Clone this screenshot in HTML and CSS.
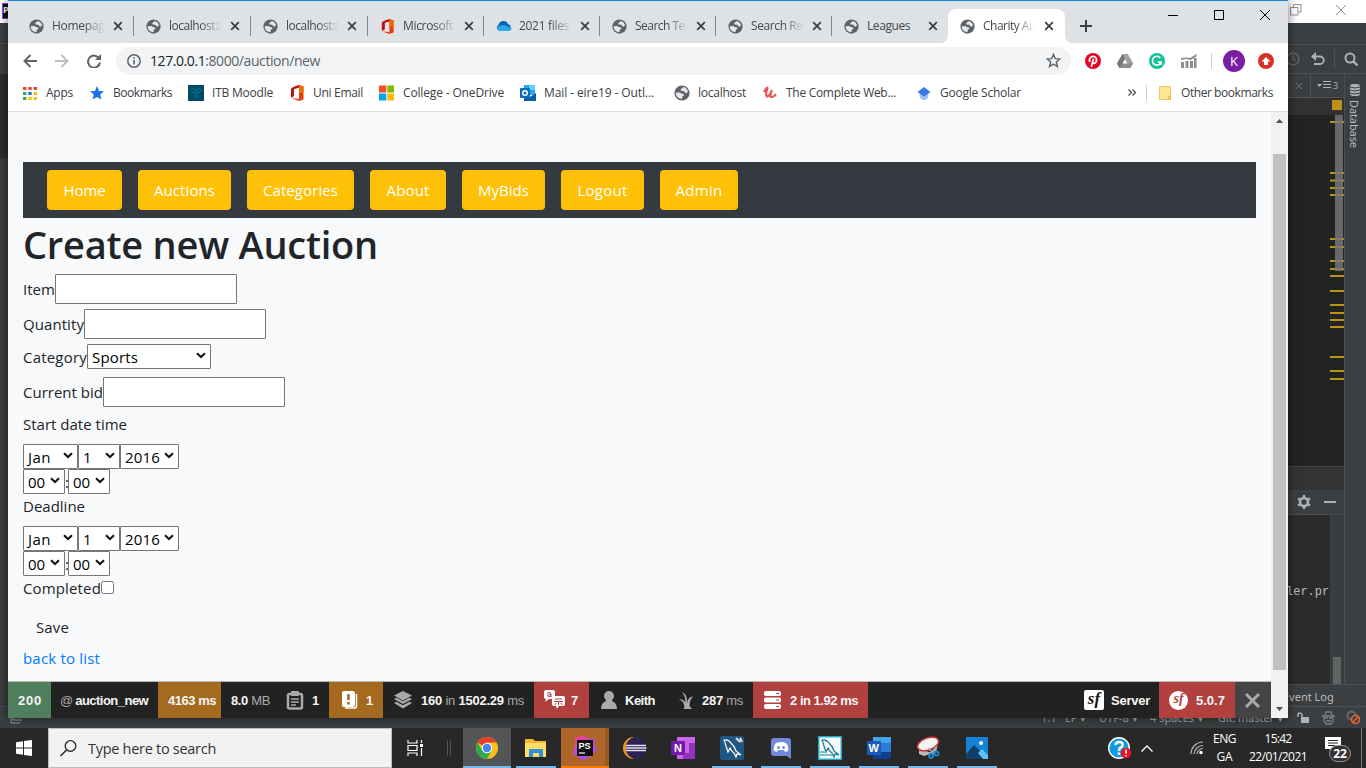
FILE: index.html
```html
<!DOCTYPE html>
<html lang="en">
<head>
<meta charset="utf-8">
<title>Charity Auction</title>
<link rel="stylesheet" href="styles.css">
</head>
<body>
<svg class="defs" width="0" height="0">
  <symbol id="globe" viewBox="0 0 16 16"><circle cx="8" cy="8" r="7.600" fill="#5f6368"/><path d="M1.900 7.600L5.500 7.400L7.500 8.600L9.800 9L10 10.500L8.300 11.400L8 14Q3.200 13.500 1.900 9.500Z" fill="#e4e6e9"/><path d="M8 3.200L9.600 2Q12.800 2.800 14 6.500L12.500 8.200L10.800 7.400L10 6L7 5.800L6.600 4.600Z" fill="#e4e6e9"/></symbol>
  <symbol id="x" viewBox="0 0 10 10"><path d="M1.200 1.200L8.800 8.800M8.800 1.200L1.200 8.800" stroke="#3c4043" stroke-width="1.800"/></symbol>
  <symbol id="office" viewBox="0 0 14 16"><path d="M9 0L13.500 1.500V14.500L9 16L1 13L9 14V2.500L4 4V11L1 12.500V4Z" fill="#e43d12"/><path d="M9 0L4.500 1.600Q1 2.800 1 5V12.500L4 11V4L9 2.500Z" fill="#b5121b"/><path d="M9 0L13.500 1.500V8H9Z" fill="#f06a00"/></symbol>
  <symbol id="chev" viewBox="0 0 10 7"><path d="M1 1.200L5 5L9 1.200" fill="none" stroke="#111" stroke-width="2"/></symbol>
  <symbol id="dolphin" viewBox="0 0 24 24"><path d="M4 4Q8 3 11 7Q15 11 16 15L21 19L17 18L16 21L14 17Q11 15 10 12L8 16L6 10Q5 6 4 4Z" fill="none" stroke="currentColor" stroke-width="1.200"/></symbol>
</svg>
<div class="desktop">
  <section class="ide">
    <div class="ide-left"><div class="ide-left-top"><b>P</b></div><div class="ide-left-menu"></div><div class="ide-left-tool"></div><div class="ide-left-body"></div></div>
    <div class="ide-right">
      <div class="ide-title">
        <svg width="12" height="12" viewBox="0 0 12 12"><path d="M3.500 3V.5H11V8H8.500M.5 3.500H8V11H.5Z" fill="none" stroke="#909090"/></svg>
        <svg width="12" height="12" viewBox="0 0 12 12"><path d="M1 1L11 11M11 1L1 11" stroke="#909090"/></svg>
      </div>
      <div class="ide-menu"></div>
      <div class="ide-tools">
        <svg width="14" height="16" viewBox="0 0 14 16"><circle cx="5" cy="8" r="6" fill="none" stroke="#606364" stroke-width="1.500"/><path d="M5 4V8L8 10" fill="none" stroke="#606364" stroke-width="1.500"/></svg>
        <svg width="14" height="14" viewBox="0 0 14 14"><path d="M5 0V9L0 4.500Z" fill="#afb1b3"/><path d="M3 4.500H9A3.600 3.600 0 0 1 9 12H3" fill="none" stroke="#afb1b3" stroke-width="1.800"/></svg>
        <i></i>
        <svg width="15" height="15" viewBox="0 0 15 15"><circle cx="6" cy="6" r="4.500" fill="none" stroke="#afb1b3" stroke-width="2"/><path d="M9.300 9.300L13.500 13.500" stroke="#afb1b3" stroke-width="2.400"/></svg>
      </div>
      <div class="ide-main">
        <div class="ide-col">
          <div class="ide-tabs"><svg width="8" height="8" viewBox="0 0 8 8"><path d="M1 1L7 7M7 1L1 7" stroke="#6e7072"/></svg><i></i><svg width="14" height="9" viewBox="0 0 14 9"><path d="M0 3H5L2.500 6Z" fill="#afb1b3"/><path d="M6 .5H14M6 3.500H14M6 6.500H14" stroke="#afb1b3"/></svg><span>3</span></div>
          <div class="editor">
            <div class="editor-line"></div>
            <svg class="marks" width="16" height="369" viewBox="0 0 16 369"><rect x="3" y="3" width="10" height="10" fill="#be9117"/><path d="M1 25H15M1 76H15M1 83.500H15M1 91H15M1 98H15M1 142H15M1 150H15M1 164H15M1 172H15M1 179H15M1 194H15M1 208H15M1 216H15M1 223H15M1 230H15M1 260H15M1 274H15M1 282H15" stroke="#be9117" stroke-width="2"/><rect x="6" y="18" width="8" height="156" fill="#777" opacity=".82"/></svg>
          </div>
          <div class="ide-gap"></div>
          <div class="run-head"><svg width="14" height="14" viewBox="0 0 14 14"><circle cx="7" cy="7" r="4" fill="none" stroke="#afb1b3" stroke-width="2.600"/><path d="M7 0V3M7 11V14M1 3.500L3.500 5M10.500 9L13 10.500M1 10.500L3.500 9M10.500 5L13 3.500" stroke="#afb1b3" stroke-width="2.400"/></svg><b></b></div>
          <div class="console"><code>ler.pr</code><div class="console-bar"><i></i></div></div>
        </div>
        <div class="database"><svg width="12" height="14" viewBox="0 0 12 14"><rect x="1" y="1" width="10" height="12" rx="3" fill="#afb1b3"/><path d="M1 4Q6 6 11 4M1 7Q6 9 11 7M1 10Q6 12 11 10" stroke="#3c3f41" fill="none"/></svg><span>Database</span></div>
      </div>
      <div class="eventlog"><span>Event Log</span></div>
    </div>
    <div class="status">
      <svg width="12" height="14" viewBox="0 0 12 14"><path d="M3 0V9H12M1 3V12H10" fill="none" stroke="#9da0a2"/></svg>
      <span class="s1">1:1</span><span class="s2">LF <small>▼</small></span><span class="s3">UTF-8 <small>▼</small></span><span class="s4">4 spaces <small>▼</small></span><span class="s5">Git: master <small>▼</small></span>
      <svg class="lock" width="12" height="12" viewBox="0 0 12 12"><path d="M1 5V2Q1 1 2.500 1T5 2.500V6" fill="none" stroke="#afb1b3" stroke-width="1.500"/><rect x="4" y="5" width="8" height="6" fill="#afb1b3"/></svg>
      <svg width="13" height="14" viewBox="0 0 13 14"><path d="M3 4L4 1H9L10 4M0 5H13M2 5V10L4 13H9L11 10V5M3 7H6M7 7H10M4 10H9" fill="none" stroke="#7d8082" stroke-width="1.300"/></svg>
      <svg class="noenter" width="15" height="15" viewBox="0 0 15 15"><circle cx="5.500" cy="5.500" r="4" fill="none" stroke="#66696b" stroke-width="2"/><circle cx="9.500" cy="9.500" r="4" fill="#3c3f41" stroke="#e8642c" stroke-width="1.600"/><path d="M7 12L12 7" stroke="#e8642c" stroke-width="1.600"/></svg>
    </div>
  </section>

  <section class="browser">
    <header class="tabstrip">
      <div class="tab wide"><svg><use href="#globe"/></svg><span class="title"><em data-w="59">Homepage</em></span><svg class="x"><use href="#x"/></svg></div>
      <div class="tab wide"><svg><use href="#globe"/></svg><span class="title"><em data-w="55">localhost:8</em></span><svg class="x"><use href="#x"/></svg></div>
      <div class="tab wide"><svg><use href="#globe"/></svg><span class="title"><em data-w="55">localhost:8</em></span><svg class="x"><use href="#x"/></svg></div>
      <div class="tab"><svg><use href="#office"/></svg><span class="title"><em data-w="50">Microsoft</em></span><svg class="x"><use href="#x"/></svg></div>
      <div class="tab"><svg class="cloud" viewBox="0 0 16 10"><path d="M3 9.500A3 3 0 0 1 2.500 4A5 5 0 0 1 12 3A3.500 3.500 0 0 1 13 9.500Z" fill="#0364b8"/><path d="M3 9.800A3 3 0 0 1 2.500 5L8 4L15.500 7A2.500 2.500 0 0 1 13.500 9.800Z" fill="#28a8ea"/></svg><span class="title"><em data-w="50">2021 files</em></span><svg class="x"><use href="#x"/></svg></div>
      <div class="tab"><svg><use href="#globe"/></svg><span class="title"><em data-w="56">Search Tea</em></span><svg class="x"><use href="#x"/></svg></div>
      <div class="tab"><svg><use href="#globe"/></svg><span class="title"><em data-w="57">Search Res</em></span><svg class="x"><use href="#x"/></svg></div>
      <div class="tab last"><svg><use href="#globe"/></svg><span class="title full"><em data-w="43">Leagues</em></span><svg class="x"><use href="#x"/></svg></div>
      <div class="tab active"><svg><use href="#globe"/></svg><span class="title"><em data-w="58">Charity Auc</em></span><svg class="x"><use href="#x"/></svg></div>
      <svg class="plus" viewBox="0 0 12 12"><path d="M6 0V12M0 6H12" stroke="#3c4043" stroke-width="2"/></svg>
      <div class="winbtns">
        <svg viewBox="0 0 10 10"><path d="M0 5.500H10" stroke="#000"/></svg>
        <svg viewBox="0 0 10 10"><path d="M.5 .5H9.500V9.500H.5Z" fill="none" stroke="#000"/></svg>
        <svg viewBox="0 0 10 10"><path d="M0 0L10 10M10 0L0 10" stroke="#000"/></svg>
      </div>
    </header>
    <div class="toolbar">
      <svg class="back" viewBox="0 0 14 14"><path d="M14 7H1.500M7.500 1L1.500 7L7.500 13" fill="none" stroke="#5f6368" stroke-width="1.900"/></svg>
      <svg class="fwd" viewBox="0 0 14 14"><path d="M0 7H12.500M6.500 1L12.500 7L6.500 13" fill="none" stroke="#bbbdc0" stroke-width="1.900"/></svg>
      <svg class="reload" viewBox="0 0 14 14"><path d="M12.200 4.500A6 6 0 1 0 13 8.500" fill="none" stroke="#5f6368" stroke-width="2"/><path d="M14 0V6H8Z" fill="#5f6368"/></svg>
      <div class="omnibox">
        <svg width="14" height="14" viewBox="0 0 14 14"><circle cx="7" cy="7" r="6.200" fill="none" stroke="#5f6368" stroke-width="1.500"/><path d="M7 6V10.500M7 3.200V4.800" stroke="#5f6368" stroke-width="1.600"/></svg>
        <span class="url" data-w="170"><b>127.0.0.1</b>:8000/auction/new</span>
        <svg class="favstar" width="15" height="15" viewBox="0 0 16 16"><path d="M8 1.500L9.900 6L14.800 6.400L11 9.600L12.200 14.400L8 11.800L3.800 14.400L5 9.600L1.200 6.400L6.100 6Z" fill="none" stroke="#5f6368" stroke-width="1.500"/></svg>
      </div>
      <div class="exts">
        <svg width="16" height="16" viewBox="0 0 16 16"><circle cx="8" cy="8" r="8" fill="#e60023"/><path d="M5 9Q3.500 6.500 5.500 4.500Q8 2.500 10.500 4.300Q12.500 6.500 10.800 9.300Q9 11.200 7.500 9.600M8.500 5.800L6.300 14" fill="none" stroke="#fff" stroke-width="1.700"/></svg>
        <svg width="16" height="14" viewBox="0 0 16 14"><path d="M5.500 0H10.500L16 9.500L13.500 14H2.500L0 9.500Z" fill="#8c8c8c"/><path d="M5.500 0L8 4.500L2.500 14L0 9.500Z" fill="#777"/><path d="M5.500 0H10.500L16 9.500H11Z" fill="#a0a0a0"/><path d="M8 5L10.500 9.500H5.500Z" fill="#fff"/></svg>
        <svg width="16" height="16" viewBox="0 0 16 16"><circle cx="8" cy="8" r="8" fill="#15c39a"/><path d="M11.300 5A4.400 4.400 0 1 0 12 9H8.800M12 9V12" fill="none" stroke="#fff" stroke-width="1.600"/></svg>
        <svg width="16" height="14" viewBox="0 0 16 14"><path d="M0 8H3V14H0ZM4.500 7H7.500V14H4.500ZM9 7H12V14H9ZM13 4H15.500V14H13Z" fill="#8d8d8d"/><path d="M0 6V4L5 3.500L9 4L15.500 0V2.500L9.500 6L5 5Z" fill="#8d8d8d"/></svg>
        <i></i>
        <span class="avatar">K</span>
        <svg class="update" width="16" height="16" viewBox="0 0 16 16"><circle cx="8" cy="8" r="8" fill="#d93025"/><path d="M8 4L12.500 8.500H10V12H6V8.500H3.500Z" fill="#fff"/></svg>
      </div>
    </div>
    <nav class="bookmarks">
      <a><svg viewBox="0 0 16 16"><path d="M1 2h3.400v3H1zM6.300 2h3.400v3H6.300zM11.600 2H15v3h-3.400z" fill="#ea4335"/><path d="M1 7h3.400v3H1z" fill="#34a853"/><path d="M6.300 7h3.400v3H6.300z" fill="#1a73e8"/><path d="M11.600 7H15v3h-3.400zM6.300 12h3.400v3H6.300zM11.600 12H15v3h-3.400z" fill="#fbbc04"/><path d="M1 12h3.400v3H1z" fill="#34a853"/></svg><span data-w="27">Apps</span></a>
      <a><svg viewBox="0 0 16 16"><path d="M7 1L9 6L14 6.300L10.200 9.600L11.400 14.600L7 12L2.600 14.600L3.800 9.600L0 6.300L5 6Z" fill="#1a73e8"/></svg><span class="near" data-w="59">Bookmarks</span></a>
      <a><svg viewBox="0 0 16 16"><rect width="16" height="16" fill="#004a63"/><path d="M3 4Q6 2 8 5Q11 2 13 5Q13 8 9 8M4 7H7V13M9 5V13" fill="none" stroke="#08769a"/></svg><span data-w="61">ITB Moodle</span></a>
      <a><svg class="near"><use href="#office"/></svg><span data-w="50">Uni Email</span></a>
      <a><svg viewBox="0 0 16 16"><path d="M0 .5h7.300v7H0z" fill="#f25022"/><path d="M8.300 .5H15v7H8.300z" fill="#7fba00"/><path d="M0 8.500h7.300v7H0z" fill="#00a4ef"/><path d="M8.300 8.500H15v7H8.300z" fill="#ffb900"/></svg><span data-w="101">College - OneDrive</span></a>
      <a><svg viewBox="0 0 16 16"><path d="M4 0H15V10H4Z" fill="#28a8ea"/><path d="M9 0H15V5H9Z" fill="#50d9ff"/><path d="M4 8L10 12L16 8V16H4Z" fill="#0a5ca8"/><rect y="3" width="10" height="10" rx="1" fill="#0f6cbd"/><circle cx="5" cy="8" r="2.300" fill="none" stroke="#fff" stroke-width="1.500"/></svg><span data-w="110">Mail - eire19 - Outl...</span></a>
      <a><svg class="near"><use href="#globe"/></svg><span data-w="48">localhost</span></a>
      <a><svg class="near" viewBox="0 0 16 16"><path d="M2 7Q5 2 5.500 3Q3 10 5 11.500Q8 11 9.800 5Q7 12 9.500 12Q12 12 14 9" fill="none" stroke="#ec5252" stroke-width="2.200"/></svg><span data-w="110">The Complete Web...</span></a>
      <a><svg viewBox="0 0 16 16"><circle cx="8" cy="10.500" r="4.500" fill="#a0c3ff"/><path d="M8 2L14.500 7L8 11.500L1.500 7Z" fill="#3b78e7"/></svg><span data-w="81">Google Scholar</span></a>
      <div class="bm-end"><svg class="more" width="8" height="7" viewBox="0 0 8 7"><path d="M.5 .5L3.500 3.500L.5 6.500M4.500 .5L7.500 3.500L4.500 6.500" fill="none" stroke="#4a4d51" stroke-width="1.300"/></svg><i></i><svg width="12" height="14" viewBox="0 0 12 14"><path d="M.5 .5H11.500V13.500H.5Z" fill="#ffe594" stroke="#ecc95a"/><path d="M9.500 10V13.500H11.500V10Z" fill="#ffe594" stroke="#e5b93a"/></svg><span data-w="92">Other bookmarks</span></div>
    </nav>
    <div class="viewport">
      <div class="pagecol">
        <main class="page">
          <nav class="navbar">
            <a class="w75"><span data-w="42">Home</span></a><a class="w93"><span data-w="61">Auctions</span></a><a class="w107"><span data-w="75">Categories</span></a><a class="w76"><span data-w="43">About</span></a><a class="w83"><span data-w="51">MyBids</span></a><a class="w83"><span data-w="50">Logout</span></a><a class="w78"><span data-w="47">Admin</span></a>
          </nav>
          <h1><span data-w="355">Create new Auction</span></h1>
          <form>
            <div class="row item"><label><span data-w="32">Item</span></label><input type="text"></div>
            <div class="row quantity"><label><span data-w="61">Quantity</span></label><input type="text"></div>
            <div class="row category"><label><span data-w="64">Category</span></label><div class="select s-cat"><span data-w="46">Sports</span><svg><use href="#chev"/></svg></div></div>
            <div class="row bid"><label><span data-w="80">Current bid</span></label><input type="text"></div>
            <div class="legend"><span data-w="104">Start date time</span></div>
            <div class="row dates"><div class="select s-mon"><span data-w="23">Jan</span><svg><use href="#chev"/></svg></div><div class="select s-day"><span>1</span><svg><use href="#chev"/></svg></div><div class="select s-year"><span data-w="35">2016</span><svg><use href="#chev"/></svg></div></div>
            <div class="row dates"><div class="select s-time"><span data-w="17">00</span><svg><use href="#chev"/></svg></div><span class="colon">:</span><div class="select s-time"><span data-w="17">00</span><svg><use href="#chev"/></svg></div></div>
            <div class="legend deadline"><span data-w="62">Deadline</span></div>
            <div class="row dates"><div class="select s-mon"><span data-w="23">Jan</span><svg><use href="#chev"/></svg></div><div class="select s-day"><span>1</span><svg><use href="#chev"/></svg></div><div class="select s-year"><span data-w="35">2016</span><svg><use href="#chev"/></svg></div></div>
            <div class="row dates"><div class="select s-time"><span data-w="17">00</span><svg><use href="#chev"/></svg></div><span class="colon">:</span><div class="select s-time"><span data-w="17">00</span><svg><use href="#chev"/></svg></div></div>
            <div class="row done"><label><span data-w="78">Completed</span></label><input type="checkbox"></div>
            <div class="save"><span data-w="33">Save</span></div>
            <a class="backlink"><span data-w="77">back to list</span></a>
          </form>
        </main>
        <footer class="profiler">
          <div class="p-200 green"><b data-w="24">200</b></div>
          <div class="p-route"><span>@</span><b data-w="73">auction_new</b></div>
          <div class="p-time orange"><b data-w="48">4163 ms</b></div>
          <div class="p-mem"><span data-w="39"><b>8.0</b> MB</span></div>
          <div class="p-clip"><svg width="18" height="19" viewBox="0 0 18 19"><rect x="2" y="3" width="14" height="14.500" rx="1.500" fill="none" stroke="#aaa" stroke-width="2.500"/><rect x="5" y="0" width="8" height="5" rx="1" fill="#aaa"/><path d="M5 8H13M5 11H13M5 14H10" stroke="#aaa" stroke-width="1.400"/></svg><b>1</b></div>
          <div class="p-warn orange"><svg width="16" height="18" viewBox="0 0 16 18"><rect width="13" height="16" rx="2" fill="#fff"/><path d="M14.500 3V15Q14.500 17 12.500 17H3" fill="none" stroke="#fff" stroke-width="1.500"/><path d="M6.500 3V9M6.500 11V13.500" stroke="#a46a1f" stroke-width="2.500"/></svg><b>1</b></div>
          <div class="p-layers"><svg width="18" height="18" viewBox="0 0 18 18"><path d="M9 0L18 4.500L9 9.500L0 4.500ZM0 8L2.500 6.800L9 10.300L15.500 6.800L18 8L9 13ZM0 12L2.500 10.800L9 14.300L15.500 10.800L18 12L9 17.500Z" fill="#aaa"/></svg><span data-w="103"><b>160</b> in <b>1502.29</b> ms</span></div>
          <div class="p-lang red"><svg width="21" height="20" viewBox="0 0 21 20"><path d="M2 0H9Q11 0 11 2V6Q9 6 8 8V9H5L1 12L2 9Q0 9 0 7V2Q0 0 2 0Z" fill="#fff"/><path d="M10 6H19Q21 6 21 8V14Q21 16 19 16H15L13 19L12 16H10Q8 16 8 14V8Q8 6 10 6Z" fill="#fff"/><path d="M3 3Q7 1.500 7 4V7M7 4.500Q3 4.500 3.500 6T7 6M11 9H18M10 11.500H19M14.500 11.500V15M12 13L11 15M17 13L18 15" fill="none" stroke="#b0413e"/></svg><b>7</b></div>
          <div class="p-user"><svg width="16" height="18" viewBox="0 0 16 18"><circle cx="8" cy="5" r="5" fill="#aaa"/><path d="M5 8H11V10Q16 12 16 18H0Q0 12 5 10Z" fill="#aaa"/></svg><b data-w="30">Keith</b></div>
          <div class="p-twig"><svg width="14" height="17" viewBox="0 0 14 17"><path d="M3 0Q8.500 2 8 11Q9 5 14 4.500Q10.500 8 10.500 14L13 17H4.500L5.500 15Q5 9 0 7.500Q4.500 6.500 6.300 11Q6.500 4 3 0Z" fill="#aaa"/></svg><span data-w="41"><b>287</b> ms</span></div>
          <div class="p-db red"><svg width="17" height="18" viewBox="0 0 17 18"><path d="M0 1.500Q0 0 2 0H15Q17 0 17 2V3.500Q17 5 15 5H2Q0 5 0 3.500ZM0 8Q0 6.500 2 6.500H15Q17 6.500 17 8V10Q17 11.500 15 11.500H2Q0 11.500 0 10ZM0 14.500Q0 13 2 13H15Q17 13 17 14.500V16Q17 18 15 18H2Q0 18 0 16Z" fill="#fff"/><path d="M12 2.500H15M12 9H15M12 15.500H15" stroke="#b0413e"/></svg><b data-w="68">2 in 1.92 ms</b></div>
          <div class="p-server"><i class="sf">sf</i><b data-w="39">Server</b></div>
          <div class="p-ver red"><i class="sf round">sf</i><b data-w="29">5.0.7</b></div>
          <div class="p-close"><svg width="15" height="15" viewBox="0 0 15 15"><path d="M1 1L14 14M14 1L1 14" stroke="#aaa" stroke-width="3"/></svg></div>
        </footer>
      </div>
      <div class="scrollbar"><svg width="7" height="4" viewBox="0 0 7 4"><path d="M0 4L3.500 0L7 4Z" fill="#505050"/></svg><div class="thumb"></div><svg width="7" height="4" viewBox="0 0 7 4"><path d="M0 0L3.500 4L7 0Z" fill="#505050"/></svg></div>
    </div>
  </section>

  <footer class="taskbar">
    <div class="start"><svg width="16" height="16" viewBox="0 0 16 16"><path d="M0 2.300L7 1.200V7.500H0ZM8 1L16 0V7.500H8ZM0 8.500H7V14.800L0 13.700ZM8 8.500H16V16L8 15Z" fill="#fff"/></svg></div>
    <div class="search"><svg width="17" height="17" viewBox="0 0 17 17"><circle cx="10.500" cy="6" r="5.300" fill="none" stroke="#222" stroke-width="1.300"/><path d="M6.500 10L.5 16" stroke="#222" stroke-width="1.400"/></svg><span data-w="128">Type here to search</span></div>
    <div class="tv"><svg width="17" height="16" viewBox="0 0 17 16"><path d="M1 0V3H10V0M1 16V13H10V16M1 5.500H10V10.500H1ZM14.500 0V3M14.500 8V16" fill="none" stroke="#fff" stroke-width="1.200"/><path d="M13 4H16V7H13Z" fill="#fff"/></svg><i></i></div>
    <div class="apps">
      <div class="app on"><svg viewBox="0 0 24 24"><circle cx="12" cy="12" r="11" fill="#fbc116"/><path d="M12 12L2.500 6.500A11 11 0 0 1 21.500 6.500H12Z" fill="#e33b2e"/><path d="M2.500 6.500A11 11 0 0 0 12 23L16.500 14.500L12 12L7.500 15Z" fill="#2da94f"/><circle cx="12" cy="12" r="5.200" fill="#fff"/><circle cx="12" cy="12" r="4.200" fill="#4285f4"/></svg></div>
      <div class="app"><svg viewBox="0 0 24 24"><path d="M1 3H9L11 5H22V21H1Z" fill="#f5b92b"/><path d="M1 7H22V21H1Z" fill="#ffdc66"/><path d="M5 13H19V21H15V17H9V21H5Z" fill="#2d91db"/></svg></div>
      <div class="app hot"><svg viewBox="0 0 24 24"><path d="M2 2L10 0L16 3L22 3L21 9L24 14L20 18L15 22L9 24L4 20L0 17L2 10Z" fill="#b24cf2"/><path d="M2 2L10 0L16 3L5 9L1 15L2 8Z" fill="#f040a0"/><rect x="4" y="4" width="16" height="16" fill="#111"/><text x="5.500" y="12.500" font-family="Liberation Sans" font-weight="700" font-size="9" fill="#fff">PS</text><path d="M6 17H12" stroke="#fff" stroke-width="1.200"/></svg></div>
      <div class="app none"><svg viewBox="0 0 24 24"><path d="M12 1A11 11 0 0 0 12 23A12 12 0 0 1 12 1Z" fill="#f7941e"/><circle cx="14" cy="12" r="10.500" fill="#2c2255"/><path d="M4 9.500H24M3.500 12H24.500M4 14.500H24" stroke="#e4e0ef" stroke-width="1.300"/></svg></div>
      <div class="app none"><svg viewBox="0 0 24 24"><rect x="6" y="1" width="18" height="22" fill="#ca64ea"/><path d="M18 7H24V23H12V17H18Z" fill="#9332bf"/><rect y="5" width="14" height="14" rx="1" fill="#7719aa"/><text x="3" y="16" font-family="Liberation Sans" font-weight="700" font-size="11" fill="#fff">N</text></svg></div>
      <div class="app"><svg viewBox="0 0 24 24" color="#fff"><rect width="24" height="24" rx="2" fill="#205780"/><use href="#dolphin"/><path d="M16 2L20 6M20 2L22 6" stroke="#ddd" stroke-width="2"/></svg></div>
      <div class="app"><svg viewBox="0 0 24 24"><path d="M5 2H19Q22 2 22 5V23L18 20H5Q2 20 2 17V5Q2 2 5 2Z" fill="#7289da"/><path d="M5 15Q4 10 7 7Q12 5 17 7Q20 10 19 15L16 16L15 14H9L8 16Z" fill="#fff"/><circle cx="9.500" cy="11.500" r="1.500" fill="#7289da"/><circle cx="14.500" cy="11.500" r="1.500" fill="#7289da"/></svg></div>
      <div class="app"><svg viewBox="0 0 24 24" color="#17758f"><rect x=".7" y=".7" width="22.600" height="22.600" fill="#f5fafa" stroke="#22a5c9" stroke-width="1.500"/><use href="#dolphin"/><path d="M2 16H9M2 19H15" stroke="#54aebb" stroke-width="1.500"/></svg></div>
      <div class="app"><svg viewBox="0 0 24 24"><rect x="6" y="1" width="18" height="22" fill="#2b7cd3"/><path d="M6 1H24V7H6Z" fill="#41a5ee"/><path d="M6 16H24V23H6Z" fill="#103f91"/><rect y="5" width="14" height="14" rx="1" fill="#185abd"/><text x="1.500" y="16" font-family="Liberation Sans" font-weight="700" font-size="11" fill="#fff">W</text></svg></div>
      <div class="app"><svg viewBox="0 0 24 24"><path d="M3 13L16 17L22 8L20 16L8 20L3 18Z" fill="#b9bcc0"/><ellipse cx="12" cy="8" rx="11" ry="6" transform="rotate(-20 12 8)" fill="#f3f3f3" stroke="#c33" stroke-width="1.500"/><path d="M12 12L18 18M20 11L14 18" stroke="#aaa" stroke-width="1.500"/><circle cx="15" cy="20" r="2" fill="none" stroke="#1683cb" stroke-width="2"/><circle cx="20.500" cy="17.500" r="2" fill="none" stroke="#1683cb" stroke-width="2"/></svg></div>
      <div class="app"><svg viewBox="0 0 24 24"><path d="M1 1H23V23H1Z" fill="#1683d8"/><path d="M1 18L9 9L23 23H1Z" fill="#123f65"/><path d="M13 17L17 13L23 19V23H18Z" fill="#5bc3f8"/><circle cx="16" cy="7" r="2" fill="#fff"/></svg></div>
    </div>
    <div class="tray">
      <svg class="help" viewBox="0 0 24 22"><circle cx="11" cy="11" r="10.300" fill="#139be0" stroke="#fff" stroke-width="1.400"/><path d="M7.500 8Q8 5 11 5Q15 5 14.500 8Q14.500 10 12 11Q11 12 11 14M11 15.500V18" fill="none" stroke="#fff" stroke-width="2.500"/><circle cx="18" cy="16" r="5.200" fill="#e81123"/><path d="M18 12.500V16.500M18 18V19.500" stroke="#fff" stroke-width="1.600"/></svg>
      <svg class="up" viewBox="0 0 12 7"><path d="M.5 6.500L6 1L11.500 6.500" fill="none" stroke="#fff" stroke-width="1.300"/></svg>
      <svg class="wifi" viewBox="0 0 14 14"><path d="M1 13A12 12 0 0 1 13 1M4 13A9 9 0 0 1 13 4.500M7 13A6 6 0 0 1 13 7.500" fill="none" stroke="#bbb" stroke-width="1.200"/><circle cx="11" cy="11.500" r="1.700" fill="#fff"/></svg>
      <div class="lang"><span data-w="23">ENG</span><span data-w="16">GA</span></div>
      <div class="clock"><span data-w="27">15:42</span><span data-w="58">22/01/2021</span></div>
      <div class="notes"><svg width="16" height="16" viewBox="0 0 16 16"><path d="M0 0H16V12H9L5 16V12H0Z" fill="#fff"/><path d="M3 3.500H13M3 6H13M3 8.500H10" stroke="#222"/></svg><b>22</b></div>
      <i class="peek"></i>
    </div>
  </footer>
</div>
<script src="fit.js"></script>
</body>
</html>
```
FILE: fit.js
```js
// Tracks each label so that it fills the width declared in data-w.
document.querySelectorAll('[data-w]').forEach(function (el) {
  el.style.letterSpacing = '0px';
  var natural = el.getBoundingClientRect().width;
  var count = el.textContent.length;
  var gap = (parseFloat(el.dataset.w) - natural) / count;
  el.style.letterSpacing = gap.toFixed(3) + 'px';
});
```
FILE: styles.css
```css
* { box-sizing: border-box; }
body { margin: 0; font-family: "Open Sans", "Noto Sans", sans-serif; }
svg { display: block; flex: none; }
i, em { font-style: normal; }
[data-w] { display: inline-block; white-space: pre; }
.defs { position: absolute; }
.desktop { position: relative; width: 1366px; height: 768px; overflow: hidden; background: #2b2b2b; }

/* editor window in the back */
.ide { position: absolute; inset: 0 0 40px 0; background: #3c3f41; display: flex; flex-wrap: wrap; justify-content: space-between; align-content: flex-start; }
.ide-left { width: 8px; height: 706px; display: flex; flex-direction: column; }
.ide-left-top { height: 23px; background: #fff; padding: 3px 0 0 2px; }
.ide-left-top b { display: block; width: 6px; height: 16px; background: #111; border: 1px solid #9045e8; border-right: 0; color: #fff; font-size: 9px; line-height: 12px; overflow: hidden; }
.ide-left-menu { height: 21px; border-bottom: 1px solid #515151; }
.ide-left-tool { height: 30px; }
.ide-left-body { flex: 1; background: linear-gradient(#2b2d2e 0 84px, #3a3c3d 84px); }
.ide-right { width: 78px; height: 706px; display: flex; flex-direction: column; }
.ide-title { height: 23px; background: #fff; display: flex; justify-content: space-between; padding: 4px 19px 0 2px; }
.ide-menu { height: 22px; border-bottom: 1px solid #515151; }
.ide-tools { height: 29px; border-bottom: 1px solid #515151; display: flex; align-items: center; padding: 0 7px 0 0; justify-content: space-between; }
.ide-tools i { width: 1px; height: 20px; background: #515151; }
.ide-main { display: flex; height: 610px; }
.ide-col { width: 57px; border-right: 1px solid #4b4e50; display: flex; flex-direction: column; }
.ide-tabs { height: 24px; border-bottom: 1px solid #505253; display: flex; align-items: center; gap: 0; padding-left: 7px; color: #afb1b3; font-size: 9px; }
.ide-tabs i { width: 1px; height: 23px; background: #505253; margin: 0 6px 0 7px; }
.ide-tabs span { margin-left: 2px; }
.editor { height: 368px; background: #222423; position: relative; }
.editor-line { height: 17px; background: #313233; }
.marks { position: absolute; right: -1px; top: -1px; }
.ide-gap { height: 24px; background: #313335; border-top: 1px solid #444; }
.run-head { height: 24px; display: flex; align-items: center; gap: 13px; padding-left: 9px; }
.run-head b { width: 12px; height: 2px; background: #afb1b3; }
.console { flex: 1; background: #2b2b2b; display: flex; justify-content: space-between; border-top: 1px solid #4b4e50; }
.console code { width: 42px; padding-top: 70px; margin-left: -2px; font: 12px "Liberation Mono", monospace; color: #bbb; overflow: hidden; white-space: nowrap; width: 44px; }
.console-bar { width: 14px; background: #3a3d3f; display: flex; align-items: flex-end; justify-content: center; }
.console-bar i { width: 8px; height: 27px; background: #606263; }
.database { width: 21px; padding: 9px 0 0 4px; color: #bbb; font-size: 11px; }
.database span { writing-mode: vertical-rl; font-family: "Noto Sans"; letter-spacing: -.1px; margin: 3px 0 0 -3px; line-height: 16px; }
.eventlog { height: 22px; border-top: 1px solid #515151; color: #bbb; font: 11px/24px "Noto Sans"; white-space: nowrap; }
.eventlog span { margin-left: -5px; }
.status { width: 1366px; height: 22px; border-top: 1px solid #515151; display: flex; align-items: center; padding-left: 10px; color: #aaa; font: 11px "Noto Sans"; white-space: nowrap; }
.status small { font-size: 7px; }
.s1 { margin-left: 1019px; width: 24px; }
.s2 { width: 34px; } .s3 { width: 51px; } .s4 { width: 68px; } .s5 { width: 79px; letter-spacing: -.1px; }
.lock { margin-right: 13px; }
.noenter { margin-left: 11px; }

/* browser window */
.browser { position: absolute; left: 8px; top: 0; width: 1280px; height: 718px; background: #fff; border-top: 1px solid #1883d7; box-shadow: 0 0 10px rgba(0,0,0,.55); display: flex; flex-direction: column; }
.tabstrip { height: 42px; background: #dee1e6; display: flex; padding: 8px 0 0 9px; }
.tab { width: 116px; height: 34px; display: flex; align-items: center; padding-left: 12px; background: linear-gradient(#84878b, #84878b) right 7px / 1px 20px no-repeat; }
.tab.wide { width: 117px; }
.tab.last { background: none; }
.tab.active { background: #fff; border-radius: 8px 8px 0 0; position: relative; width: 117px; }
.tab.active::before, .tab.active::after { content: ""; position: absolute; bottom: 0; width: 8px; height: 8px; }
.tab.active::before { left: -8px; background: radial-gradient(circle at 0 0, #dee1e6 8px, #fff 8.500px); }
.tab.active::after { right: -8px; background: radial-gradient(circle at 100% 0, #dee1e6 8px, #fff 8.500px); }
.tab svg { width: 15px; height: 15px; }
.tab .cloud { width: 16px; height: 12px; margin-right: -1px; }
.tab svg.x { width: 10px; height: 10px; }
.title { width: 53px; margin: 0 8px; overflow: hidden; white-space: nowrap; font-size: 12px; line-height: 18px; color: #45484c; -webkit-mask-image: linear-gradient(90deg, #000 60%, transparent); mask-image: linear-gradient(90deg, #000 60%, transparent); }
.title.full { -webkit-mask-image: none; mask-image: none; }
.plus { width: 12px; height: 12px; margin: 11px 0 0 15px; }
.winbtns { display: flex; gap: 36px; margin: 1px 18px 0 auto; }
.winbtns svg { width: 10px; height: 10px; }
.toolbar { height: 35px; display: flex; align-items: center; padding-left: 15px; }
.back, .fwd, .reload { width: 14px; height: 14px; margin-right: 18px; }
.reload { margin-right: 15px; }
.omnibox { width: 955px; height: 28px; border-radius: 14px; background: #f1f3f4; display: flex; align-items: center; padding: 0 10px 0 11px; }
.url { margin-left: 9px; font-size: 14px; color: #5f6368; }
.url b { font-weight: 400; color: #202124; }
.favstar { margin-left: auto; }
.exts { display: flex; align-items: center; gap: 16px; margin-left: 14px; }
.exts i { width: 1px; height: 16px; background: #ccc; margin-right: -5px; margin-left: -2px; }
.avatar { width: 22px; height: 22px; border-radius: 50%; background: #7b1fa2; color: #fff; font-size: 13px; line-height: 22px; text-align: center; }
.update { margin-left: -3px; }
.bookmarks { height: 34px; border-bottom: 1px solid #d9dbde; display: grid; grid-template-columns: 68px 98px 102px 89px 141px 155px 88px 153px 107px 1fr; align-items: center; padding: 0 15px 4px 14px; font-size: 12px; color: #3c4043; line-height: 18px; }
.bookmarks a { display: flex; align-items: center; gap: 8px; }
.bookmarks a svg { width: 16px; height: 16px; }
.bookmarks .near { margin-left: -1px; }
.bm-end { display: flex; align-items: center; justify-content: flex-end; }
.bm-end i { width: 1px; height: 16px; background: #ccc; margin: 0 12px 0 10px; }
.bm-end svg { margin-right: 10px; }
.bm-end .more { margin-right: 0; }
.viewport { flex: 1; display: flex; min-height: 0; }
.pagecol { width: 1263px; display: flex; flex-direction: column; }
.page { flex: 1; background: #f8f9fa; padding: 50px 15px 0; color: #212529; font-size: 15px; line-height: 24px; border-bottom: 1px solid #bbb; min-height: 0; }
.navbar { height: 56px; background: #343a40; display: flex; align-items: center; gap: 16px; padding-left: 24px; color: #fff; }
.navbar a { height: 40px; border-radius: 4px; background: #ffc107; display: flex; align-items: center; justify-content: center; }
.w75 { width: 75px; } .w93 { width: 93px; } .w107 { width: 107px; } .w76 { width: 76px; } .w83 { width: 83px; } .w78 { width: 78px; }
h1 { margin: 0; height: 56px; font-size: 38px; line-height: 52px; font-weight: 600; }
.row { display: flex; align-items: center; }
.row label { flex: none; white-space: nowrap; }
.item, .quantity, .bid { height: 30px; }
.quantity { margin: 5px 0; }
.category { height: 25px; margin-bottom: 8px; }
.item label { width: 32px; } .quantity label { width: 61px; } .category label { width: 64px; } .bid label { width: 80px; } .done label { width: 78px; }
.row input[type=text] { width: 182px; height: 30px; border: 1px solid #767676; border-radius: 1px; background: #fff; padding: 0; margin: 0; }
.select { height: 25px; border: 1px solid #767676; border-radius: 1px; background: #fff; color: #000; display: flex; align-items: center; justify-content: space-between; padding: 0 4px; }
.select svg { width: 10px; height: 7px; margin-top: -2px; }
.s-cat { width: 124px; } .s-mon { width: 55px; } .s-day { width: 42px; } .s-year { width: 59px; } .s-time { width: 42px; }
.colon { width: 3px; letter-spacing: -1px; }
.legend { height: 37px; line-height: 35px; }
.deadline { height: 32px; line-height: 25px; }
.done { height: 25px; padding-bottom: 1px; margin-bottom: 8px; }
.done input { width: 13px; height: 13px; margin: -1px 0 0; }
.save { height: 38px; line-height: 37px; padding-left: 13px; }
.backlink { display: block; color: #007bff; line-height: 23px; }
.profiler { height: 36px; background: #222; color: #f5f5f5; display: flex; font: 13px "Liberation Sans", Arial, sans-serif; }
.profiler > div { display: flex; align-items: center; padding-left: 10px; gap: 8px; color: #aaa; }
.profiler b { color: #f5f5f5; }
.profiler .green { background: #4f805d; } .profiler .orange { background: #a46a1f; } .profiler .red { background: #b0413e; }
.p-200 { width: 43px; }
.p-route { width: 107px; } .profiler .p-route { gap: 2px; padding-left: 9px; }
.p-time { width: 63px; } .p-mem { width: 58px; }
.p-clip { width: 50px; } .profiler .p-clip { padding-left: 7px; }
.p-warn { width: 54px; } .profiler .p-warn { padding-left: 13px; gap: 8px; }
.p-layers { width: 151px; } .profiler .p-layers { padding-left: 11px; gap: 9px; }
.p-lang { width: 55px; } .profiler .p-lang { gap: 6px; }
.p-user { width: 81px; } .profiler .p-user { padding-left: 12px; gap: 8px; }
.p-twig { width: 83px; } .profiler .p-twig { padding-left: 9px; gap: 9px; }
.p-db { width: 115px; } .profiler .p-db { padding-left: 11px; gap: 9px; }
.p-server { margin-left: auto; width: 85px; }
.p-ver { width: 76px; }
.profiler .p-close { width: 36px; background: #444; }
.sf { width: 20px; height: 20px; border-radius: 2px; background: #fff; color: #111; font: italic bold 17px/17px "Liberation Serif", serif; text-align: center; }
.profiler .p-server { gap: 7px; }
.sf.round { border-radius: 50%; width: 19px; height: 19px; color: #b0413e; font-size: 14px; line-height: 16px; }
.scrollbar { width: 17px; background: #f1f1f1; display: flex; flex-direction: column; align-items: center; padding: 7px 0 7px; }
.thumb { width: 13px; height: 516px; background: #c1c1c1; margin: 31px 0 auto; }

/* taskbar */
.taskbar { position: absolute; left: 0; bottom: 0; width: 1366px; height: 40px; background: #282828; display: flex; color: #fff; }
.start { width: 48px; display: flex; align-items: center; justify-content: center; }
.search { width: 344px; background: #f2f2f2; border: 1px solid #bbb; display: flex; align-items: center; gap: 11px; padding-left: 11px; color: #333; font-size: 14.500px; }
.tv { width: 71px; display: flex; align-items: center; padding-left: 15px; gap: 23px; }
.tv i { width: 4px; height: 16px; border: solid #555; border-width: 0 1px; }
.apps { display: flex; gap: 1px; }
.app { width: 48px; height: 40px; display: flex; align-items: center; justify-content: center; background: linear-gradient(#76b9ed, #76b9ed) center bottom / 40px 2px no-repeat; }
.app svg { width: 24px; height: 24px; overflow: visible; }
.app.none { background: none; }
.app.on { background: #545556; border-bottom: 2px solid #76b9ed; padding-top: 2px; }
.app.hot { background: linear-gradient(90deg, #ae6529 44px, #985821 44px); border-bottom: 2px solid #ff7b00; padding-top: 2px; }
.tray { margin-left: auto; display: flex; align-items: center; font-size: 12px; }
.help { width: 24px; height: 22px; margin-right: 9px; }
.up { width: 12px; height: 7px; margin-right: 37px; }
.wifi { width: 14px; height: 14px; margin-right: 9px; }
.lang, .clock { display: flex; flex-direction: column; align-items: center; line-height: 18px; }
.lang { margin-right: 13px; }
.clock { margin-right: 18px; }
.notes { position: relative; width: 28px; height: 24px; margin-right: 8px; padding-top: 1px; }
.notes b { position: absolute; left: 4px; top: 9px; width: 22px; height: 17px; border: 1px solid #999; border-radius: 9px; background: #333; font-size: 12px; line-height: 15px; text-align: center; }
.peek { width: 1px; height: 40px; background: #777; margin-right: 4px; }
```
